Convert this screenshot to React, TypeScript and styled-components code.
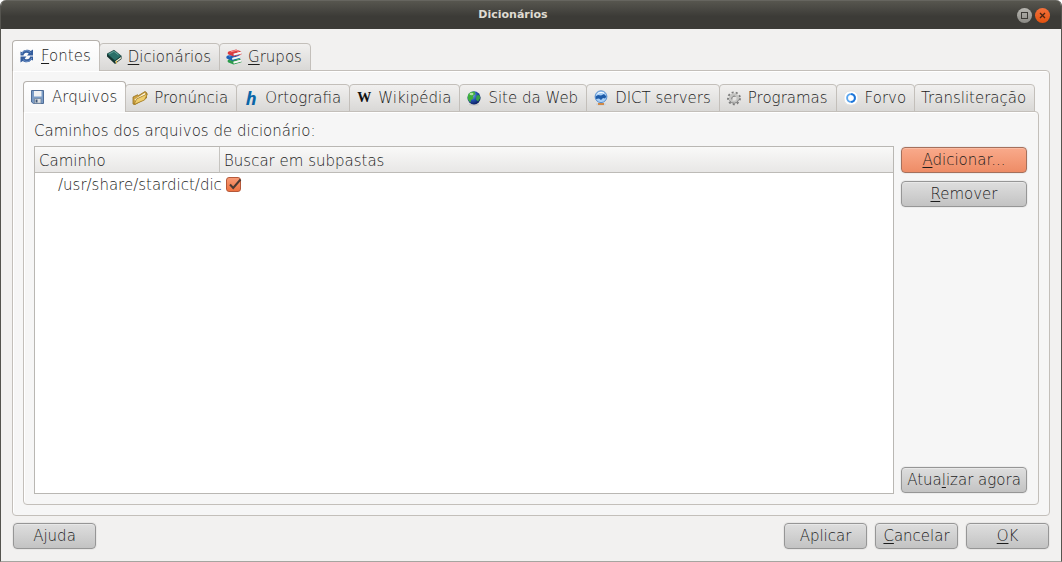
import React from "react";
import styled, { createGlobalStyle, css } from "styled-components";

const Global = createGlobalStyle`
  *, *::before, *::after { box-sizing: border-box; }
  body { margin: 0; background: #fff; }
  button, input { font: inherit; color: inherit; margin: 0; }
  u { text-decoration: underline; text-decoration-thickness: 1px; text-underline-offset: 2px; text-decoration-skip-ink: none; }
`;

const Window = styled.div`
  display: flex;
  flex-direction: column;
  min-height: 100vh;
  background: #f2f1f0;
  border: 1px solid #55544f;
  border-top: 0;
  border-bottom-color: #a5a5a0;
  border-radius: 6px 6px 0 0;
  overflow: hidden;
  color: #1c1c1c;
  font: 200 15px/18px "DejaVu Sans Light", "DejaVu Sans", sans-serif;
`;

const TitleBar = styled.header`
  display: flex;
  align-items: center;
  height: 29px;
  padding: 0 11px 0 8px;
  background: linear-gradient(#57564f, #3c3b37 55%, #3c3b37);
  border-top: 1px solid #66655f;
`;

const Title = styled.h1`
  flex: 1;
  margin: 0;
  text-align: center;
  color: #dfdbd2;
  font: bold 11px/14px "DejaVu Sans", sans-serif;
`;

const WindowControls = styled.div`
  display: flex;
  justify-content: flex-end;
  gap: 3px;
`;

const ControlButton = styled.button<{ $close?: boolean }>`
  display: grid;
  place-items: center;
  width: 15px;
  height: 15px;
  padding: 0;
  border: 0;
  border-radius: 50%;
  background: ${(p) => (p.$close ? "linear-gradient(#f4713c, #e2520f)" : "linear-gradient(#b8b7b2, #8a8984)")};
`;

const Body = styled.main`
  display: flex;
  flex-direction: column;
  flex: 1;
  padding: 11px 11px 12px;
`;

const TabList = styled.div`
  display: flex;
  align-items: flex-end;
  height: 31px;
  margin-bottom: -1px;
  z-index: 1;
`;

const TabButton = styled.button<{ $selected?: boolean }>`
  display: flex;
  align-items: center;
  gap: 6px;
  height: 28px;
  margin-left: -1px;
  padding: 0 8px 0 6px;
  border: 1px solid #c3bfba;
  border-radius: 4px 4px 0 0;
  background: linear-gradient(#f1f0ef, #d9d8d6);
  white-space: nowrap;
  ${(p) =>
    p.$selected &&
    css`
      height: 31px;
      margin-left: 0;
      padding: 0 8px 1px 6px;
      border-color: #b5b1ac;
      border-bottom: 0;
      background: linear-gradient(#ffffff, #f6f6f6);
    `}
`;

const Panel = styled.section`
  display: flex;
  flex-direction: column;
  flex: 1;
  padding: 10px;
  background: #f6f6f6;
  border: 1px solid #c3bfba;
  border-radius: 0 4px 4px 4px;
  box-shadow: inset 1px 1px #fff;
`;

const Caption = styled.h2`
  margin: 0 0 6px;
  font: inherit;
`;

const Columns = styled.div`
  display: flex;
  flex: 1;
  gap: 7px;
`;

const ListBox = styled.div`
  flex: 1;
  background: #fff;
  border: 1px solid #b9b7b3;
`;

const Table = styled.table`
  width: 100%;
  table-layout: fixed;
  border-collapse: separate;
  border-spacing: 0;
`;

const HeadCell = styled.th<{ $divided?: boolean }>`
  width: ${(p) => (p.$divided ? "185px" : "auto")};
  height: 26px;
  padding: 2px 4px 0;
  font-weight: inherit;
  text-align: left;
  background: linear-gradient(#f9f9f8, #e8e7e6);
  border-bottom: 1px solid #bdbbb7;
  border-right: ${(p) => (p.$divided ? "1px solid #c6c4c0" : "0")};
`;

const Cell = styled.td<{ $indent?: boolean }>`
  height: 23px;
  padding: 0 0 0 ${(p) => (p.$indent ? 23 : 6)}px;
  white-space: nowrap;
`;

const Check = styled.span`
  display: grid;
  width: 18px;
  height: 16px;
  & > * { grid-area: 1 / 1; }
  & > svg { pointer-events: none; }
`;

const CheckInput = styled.input`
  appearance: none;
  width: 15px;
  height: 15px;
  border: 1px solid #b5593a;
  border-radius: 3px;
  background: linear-gradient(#f79a75, #ee7240);
`;

const Side = styled.div`
  display: flex;
  flex-direction: column;
  gap: 8px;
  width: 127px;
  padding: 1px 1px 1px 0;
`;

const PushButton = styled.button<{ $primary?: boolean; $last?: boolean; $wide?: boolean }>`
  height: 26px;
  width: ${(p) => (p.$wide ? "auto" : "83px")};
  padding: 0;
  border: 1px solid ${(p) => (p.$primary ? "#a5705c" : "#969696")};
  border-radius: 4px;
  background: ${(p) => (p.$primary ? "linear-gradient(#f9aa8b, #ee8c66)" : "linear-gradient(#dedede, #c3c3c3)")};
  box-shadow: inset 0 1px ${(p) => (p.$primary ? "#fbbba2" : "#e8e8e8")}, 0 0 0 1px rgba(0, 0, 0, 0.04);
  white-space: nowrap;
  ${(p) => p.$last && "margin-top: auto;"}
`;

const Footer = styled.footer`
  display: flex;
  gap: 8px;
  padding: 7px 1px 0;
`;

const Spacer = styled.span`
  flex: 1;
`;

const Svg = styled.svg`
  flex: none;
  width: 16px;
  height: 16px;
`;

const Icon = ({ children }: { children: React.ReactNode }) => (
  <Svg viewBox="0 0 16 16" aria-hidden="true">{children}</Svg>
);

const SyncArrow = () => (
  <>
    <path d="M1.500 7.500V3.500L3 4.200C4.200 2.500 5.800 1.700 7.800 1.700c1.600 0 2.900.5 3.900 1.300L14 1.500v6H8l1.800-2C9 4.800 8.200 4.600 7.400 4.700 5.500 4.900 4.600 6 4.500 7.500z" fill="#345d9d" />
    <path d="M2.800 6C3.500 3.500 5.500 2.500 7.500 2.600c1.800 0 3 .8 4 1.900" fill="none" stroke="#7d9fd0" strokeWidth=".9" />
  </>
);

const SyncIcon = () => (
  <Icon>
    <SyncArrow />
    <g transform="rotate(180 7.750 8)"><SyncArrow /></g>
  </Icon>
);

const BookIcon = () => (
  <Icon>
    <path d="M1 5v2.500L9 15l6.500-5V7.200z" fill="#12332f" />
    <path d="M9.300 12 15 7.900v1.500L9.500 13.700z" fill="#f3ecd4" />
    <path d="M1 5 8 1.200l7.300 5.800L9 11.800z" fill="#2a6f68" stroke="#15423c" strokeWidth=".7" />
    <path d="M3 5 8 2.400l4.500 3.500" fill="none" stroke="#6fb0a6" strokeWidth=".8" />
    <path d="M9.500 12.500 11 11.400v3l-.8.200z" fill="#d8b64c" />
  </Icon>
);

const StackedBook = ({ cover, light, shift }: { cover: string; light: string; shift: string }) => (
  <g transform={shift}>
    <path d="M2 3C.8 3.800.8 5.500 2 6l5 2 8-2.300V5L7.300 7 7 5.300 14.800 3 9.500 1z" fill={cover} />
    <path d="M7 5.300 14.600 3.200v1.900L7.200 7.100z" fill="#f7f7f7" />
    <path d="M4 3.400 9.500 1.900l2.500.9" fill="none" stroke={light} strokeWidth=".9" />
  </g>
);

const BooksIcon = () => (
  <Icon>
    <StackedBook cover="#2c9b4c" light="#8fe0a0" shift="translate(.5 7.500)" />
    <StackedBook cover="#1c5fb8" light="#7db4f0" shift="translate(-.8 3.700)" />
    <StackedBook cover="#d93a3e" light="#ff9d98" shift="translate(.6 -.5)" />
  </Icon>
);

const FloppyIcon = () => (
  <Icon>
    <path d="M1.500 1.500h12v13h-10l-2-1.500z" fill="#7b9cc6" stroke="#4f6d97" />
    <path d="M4 2h7.500v5.500H4z" fill="#f0f1f2" />
    <path d="M4.500 9.500h6.500v4.800H4.500z" fill="#dcdfe2" stroke="#71859e" strokeWidth=".8" />
    <path d="M5.600 10.600h1.900v3H5.600z" fill="#3e587a" />
  </Icon>
);

const FolderIcon = () => (
  <Icon>
    <path d="M1 14V7l4.500-2.200 1 .8L13 1.500l1.500 1V8L3 14.500z" fill="#cda141" stroke="#93701f" strokeWidth=".8" />
    <path d="M2.500 9.500 12.800 3l.9 1.800L4 11.500z" fill="#fffbe8" />
    <path d="M2 14.500 4.500 9 15.500 3.800 12.500 10z" fill="#efcd6d" stroke="#a37d25" strokeWidth=".8" />
  </Icon>
);

const Glyph = styled.span<{ $wiki?: boolean }>`
  width: 16px;
  text-align: center;
  ${(p) =>
    p.$wiki
      ? css`
          color: #111;
          font: bold 14px/16px "Liberation Serif", serif;
        `
      : css`
          color: #0a66a8;
          font: italic bold 18px/16px "Open Sans", sans-serif;
        `}
`;

const GlobeIcon = () => (
  <Icon>
    <defs>
      <radialGradient id="sea" cx=".35" cy=".3" r=".75">
        <stop offset="0" stopColor="#8fb8f0" />
        <stop offset=".5" stopColor="#2454b4" />
        <stop offset="1" stopColor="#0b1c5c" />
      </radialGradient>
    </defs>
    <ellipse cx="8" cy="14.500" rx="5" ry="1.200" fill="#c9c9c7" />
    <circle cx="8" cy="7.800" r="6.600" fill="url(#sea)" />
    <path d="M2 5C3.500 2 6 1.300 8.500 1.500L9.500 4 7 6l.5 2.500L5 10 4.500 12.500C2 11 1 8 2 5z" fill="#3fae3c" />
    <path d="M10.500 5.500 13.500 5l.8 3-2.300 3.500-2-2z" fill="#35a04a" />
    <ellipse cx="5.500" cy="4" rx="2" ry="1.300" fill="#c9f0c0" opacity=".8" />
  </Icon>
);

const DictIcon = () => (
  <Icon>
    <ellipse cx="8" cy="14.200" rx="5" ry="1.500" fill="#cfd3d8" />
    <path d="M7 11h2v2h2v2H5v-2h2z" fill="#d08a48" />
    <circle cx="8" cy="6.700" r="5.900" fill="#a9d0f7" stroke="#5a8fce" />
    <path d="M2.500 6.500 5 5l3 .5L11 4l2.500 2.500-1.500 2L10 8 8 10 6 8.500 3 9z" fill="#1e5ba8" />
    <path d="M4.500 3.700C6.500 2 9.500 2 11 3.200" stroke="#fff" fill="none" />
  </Icon>
);

const GearIcon = () => (
  <Icon>
    <g fill="none">
      <circle cx="8" cy="8.300" r="5.900" stroke="#7c7c7c" strokeWidth="2" strokeDasharray="2 2.120" />
      <circle cx="8" cy="8.300" r="3.800" stroke="#c4c4c2" strokeWidth="2.600" />
      <path d="M3.500 10.500a5 5 0 0 0 9.300-1" stroke="#808080" strokeWidth=".9" />
      <path d="M6 9.500A2.400 2.400 0 0 1 9.500 6.500" stroke="#666" strokeWidth=".9" />
    </g>
  </Icon>
);

const RingIcon = () => (
  <Icon>
    <rect x="1" y="1" width="14" height="14" rx="6" fill="#fff" stroke="#e3e3e1" />
    <circle cx="8" cy="8" r="3.900" fill="none" stroke="#5aa5ee" strokeWidth="1.900" />
    <path d="M8 4.100a3.900 3.900 0 0 1 0 7.800" fill="none" stroke="#1c74d8" strokeWidth="1.900" />
  </Icon>
);

type TabSpec = { icon?: React.ReactNode; label: React.ReactNode };

const mainTabs: TabSpec[] = [
  { icon: <SyncIcon />, label: <><u>F</u>ontes</> },
  { icon: <BookIcon />, label: <><u>D</u>icionários</> },
  { icon: <BooksIcon />, label: <><u>G</u>rupos</> },
];

const sourceTabs: TabSpec[] = [
  { icon: <FloppyIcon />, label: "Arquivos" },
  { icon: <FolderIcon />, label: "Pronúncia" },
  { icon: <Glyph aria-hidden="true">h</Glyph>, label: "Ortografia" },
  { icon: <Glyph $wiki aria-hidden="true">W</Glyph>, label: "Wikipédia" },
  { icon: <GlobeIcon />, label: "Site da Web" },
  { icon: <DictIcon />, label: "DICT servers" },
  { icon: <GearIcon />, label: "Programas" },
  { icon: <RingIcon />, label: "Forvo" },
  { label: "Transliteração" },
];

const Tabs = ({ items, name }: { items: TabSpec[]; name: string }) => (
  <TabList role="tablist" aria-label={name}>
    {items.map((t, i) => (
      <TabButton key={i} type="button" role="tab" aria-selected={i === 0} $selected={i === 0}>
        {t.icon}
        <span>{t.label}</span>
      </TabButton>
    ))}
  </TabList>
);

export default function App() {
  return (
    <>
      <Global />
      <Window>
        <TitleBar>
          <Title>Dicionários</Title>
          <WindowControls>
            <ControlButton type="button" aria-label="Maximizar">
              <svg width="7" height="7" aria-hidden="true">
                <rect x=".5" y=".5" width="6" height="6" fill="none" stroke="#3c3b37" />
              </svg>
            </ControlButton>
            <ControlButton type="button" aria-label="Fechar" $close>
              <svg width="7" height="7" aria-hidden="true">
                <path d="m1 1 5 5M6 1 1 6" stroke="#4a2412" strokeWidth="1.300" />
              </svg>
            </ControlButton>
          </WindowControls>
        </TitleBar>
        <Body>
          <Tabs items={mainTabs} name="Seções" />
          <Panel>
            <Tabs items={sourceTabs} name="Tipos de fonte" />
            <Panel>
              <Caption>Caminhos dos arquivos de dicionário:</Caption>
              <Columns>
                <ListBox>
                  <Table>
                    <thead>
                      <tr>
                        <HeadCell $divided>Caminho</HeadCell>
                        <HeadCell>Buscar em subpastas</HeadCell>
                      </tr>
                    </thead>
                    <tbody>
                      <tr>
                        <Cell $indent>/usr/share/stardict/dic</Cell>
                        <Cell>
                          <Check>
                            <CheckInput type="checkbox" defaultChecked aria-label="Buscar em subpastas" />
                            <svg width="18" height="16" aria-hidden="true">
                              <path d="m4 7.500 3.200 3.500L14.500 2.500" fill="none" stroke="#4b3a33" strokeWidth="2" />
                            </svg>
                          </Check>
                        </Cell>
                      </tr>
                    </tbody>
                  </Table>
                </ListBox>
                <Side>
                  <PushButton type="button" $wide $primary><u>A</u>dicionar...</PushButton>
                  <PushButton type="button" $wide><u>R</u>emover</PushButton>
                  <PushButton type="button" $wide $last>Atua<u>l</u>izar agora</PushButton>
                </Side>
              </Columns>
            </Panel>
          </Panel>
          <Footer>
            <PushButton type="button">Ajuda</PushButton>
            <Spacer />
            <PushButton type="button">Aplicar</PushButton>
            <PushButton type="button"><u>C</u>ancelar</PushButton>
            <PushButton type="button"><u>O</u>K</PushButton>
          </Footer>
        </Body>
      </Window>
    </>
  );
}
